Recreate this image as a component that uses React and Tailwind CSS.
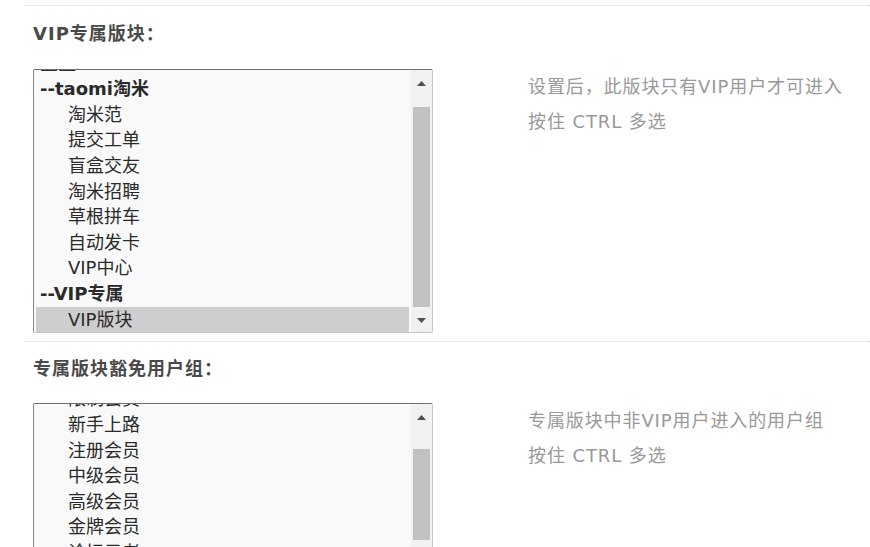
import React from "react";

const font = { fontFamily: '"DejaVu Sans", "Noto Sans CJK SC", sans-serif' };

const forumOptions = [
  { label: "三区", group: true },
  { label: "--taomi淘米", group: true },
  { label: "淘米范" },
  { label: "提交工单" },
  { label: "盲盒交友" },
  { label: "淘米招聘" },
  { label: "草根拼车" },
  { label: "自动发卡" },
  { label: "VIP中心" },
  { label: "--VIP专属", group: true },
  { label: "VIP版块", selected: true },
];

const groupOptions = [
  { label: "限制会员" },
  { label: "新手上路" },
  { label: "注册会员" },
  { label: "中级会员" },
  { label: "高级会员" },
  { label: "金牌会员" },
  { label: "论坛元老" },
];

function Arrow({ up }) {
  return (
    <svg width="9" height="5" viewBox="0 0 9 5" className="mx-auto">
      <path d={up ? "M4.5 0L9 5H0z" : "M0 0h9L4.5 5z"} fill="#505050" />
    </svg>
  );
}

function ListBox({ options, offset, height, thumbTop, thumbHeight }) {
  return (
    <div
      className="relative flex w-[400px] shrink-0 overflow-hidden rounded-[2px] border border-t-[#6f6f6f] border-l-[#858585] border-r-[#c4c4c4] border-b-[#c4c4c4] bg-[#f9f9f9]"
      style={{ height }}
    >
      <div className="flex-1 overflow-hidden px-[2px]">
        <div style={{ marginTop: offset }}>
          {options.map((o, i) => (
            <div
              key={i}
              className={
                "h-[25.6px] whitespace-nowrap text-[18px] leading-[25.6px] text-[#2a2a2a] " +
                (o.group ? "pl-[4px] font-bold " : "pl-[32px] ") +
                (o.selected ? "bg-[#cecece]" : "")
              }
            >
              {o.label}
            </div>
          ))}
        </div>
      </div>
      <div className="relative w-[21px] shrink-0 bg-[#f1f1f1]">
        <div className="absolute left-0 right-0 top-[11px]">
          <Arrow up />
        </div>
        <div
          className="absolute left-[2px] right-[2px] bg-[#c1c1c1]"
          style={{ top: thumbTop, height: thumbHeight }}
        />
        {height < 300 && (
          <div className="absolute bottom-[9px] left-0 right-0">
            <Arrow />
          </div>
        )}
      </div>
    </div>
  );
}

function Hint({ lines }) {
  return (
    <div className="ml-[95px] text-[18px] leading-[35px] tracking-[0.9px] text-[#999]">
      {lines.map((l) => (
        <div key={l} className="whitespace-nowrap">
          {l}
        </div>
      ))}
    </div>
  );
}

export default function App() {
  return (
    <div className="h-[547px] w-[870px] overflow-hidden bg-white pl-[25px] pt-[5px]" style={font}>
      <div className="border-t border-dotted border-[#c9dcea] pb-[8px] pl-[8px]">
        <div className="mt-[16px] h-[47px] text-[18px] font-bold leading-[24px] tracking-[1px] text-[#4a4a4a]">
          VIP专属版块：
        </div>
        <div className="flex items-start">
          <ListBox options={forumOptions} offset={-19.4} height={264} thumbTop={37} thumbHeight={200} />
          <Hint lines={["设置后，此版块只有VIP用户才可进入", "按住 CTRL 多选"]} />
        </div>
      </div>
      <div className="border-t border-dotted border-[#c9dcea] pl-[8px]">
        <div className="mt-[15px] h-[46px] text-[18px] font-bold leading-[24px] tracking-[1px] text-[#4a4a4a]">
          专属版块豁免用户组：
        </div>
        <div className="flex items-start">
          <ListBox options={groupOptions} offset={-17.6} height={170} thumbTop={45} thumbHeight={91} />
          <Hint lines={["专属版块中非VIP用户进入的用户组", "按住 CTRL 多选"]} />
        </div>
      </div>
    </div>
  );
}
